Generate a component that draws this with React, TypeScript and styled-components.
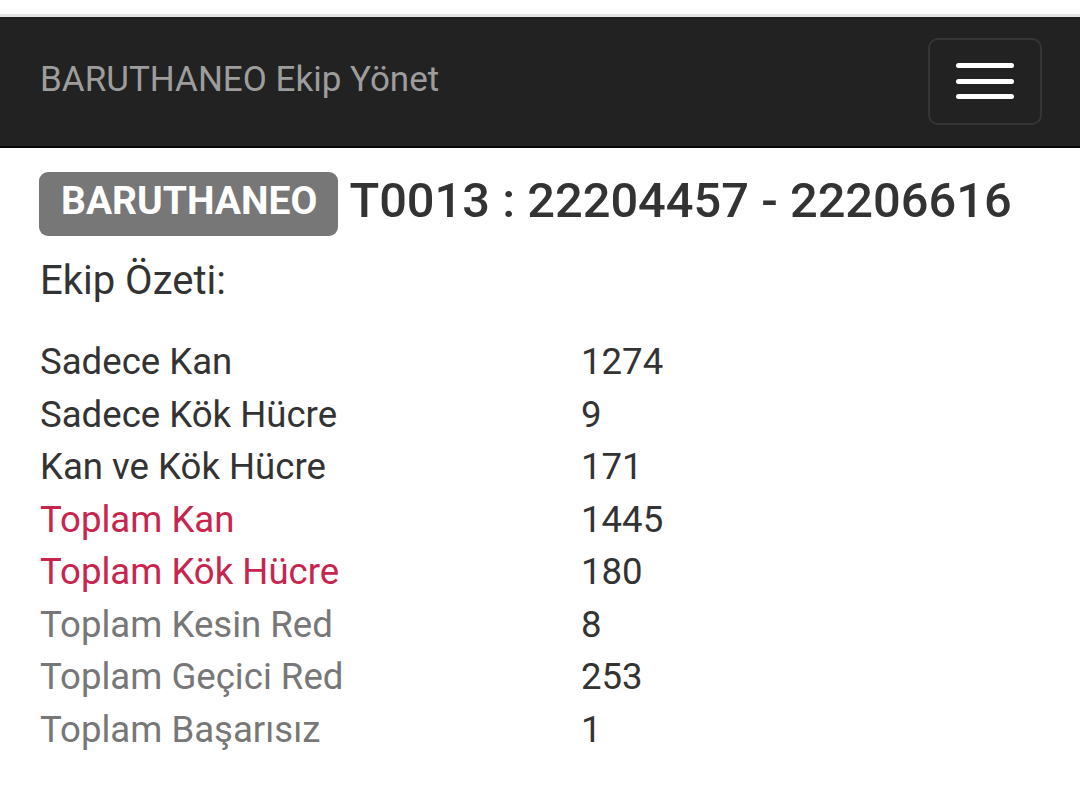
import React from "react";
import styled, { createGlobalStyle } from "styled-components";

const GlobalStyle = createGlobalStyle`
  * { box-sizing: border-box; }
  html, body { margin: 0; padding: 0; background: #ffffff; }
  body {
    font-family: Roboto, "Noto Sans", "Liberation Sans", sans-serif;
    color: #333333;
    width: 1080px;
    height: 806px;
    overflow: hidden;
  }
`;

const TopStrip = styled.div`
  height: 17px;
  background: #ffffff;
  border-bottom: 3px solid #e4e4e4;
`;

const Navbar = styled.nav`
  height: 131px;
  background: #222222;
  border-bottom: 2px solid #080808;
  display: flex;
  align-items: center;
  justify-content: space-between;
  padding: 0 38px 0 40px;
`;

const Brand = styled.a`
  color: #9d9d9d;
  font-size: 35px;
  line-height: 1;
  text-decoration: none;
  padding-bottom: 4px;
`;

const Toggle = styled.button`
  width: 114px;
  height: 87px;
  background: transparent;
  border: 2px solid #353535;
  border-radius: 10px;
  display: flex;
  flex-direction: column;
  align-items: center;
  justify-content: center;
  gap: 10.5px;
  padding: 0;
  margin-top: -1px;
`;

const Bar = styled.span`
  display: block;
  width: 58px;
  height: 5px;
  border-radius: 3px;
  background: #ffffff;
`;

const Main = styled.main`
  padding: 0 40px 0 39px;
`;

const Heading = styled.h3`
  margin: 24px 0 0;
  font-size: 48.8px;
  font-weight: 500;
  line-height: 55px;
  color: #333333;
  white-space: nowrap;
`;

const Label = styled.span`
  display: inline-block;
  background: #777777;
  color: #ffffff;
  font-weight: 700;
  font-size: 39px;
  line-height: 1;
  padding: 10px 21px 15px 22px;
  border-radius: 9px;
  margin-right: 11px;
  vertical-align: 3px;
`;

const Summary = styled.div`
  margin-top: 19px;
  padding-left: 1px;
  font-size: 40px;
  line-height: 52px;
  color: #333333;
`;

const StatGrid = styled.div`
  margin-top: 29px;
  padding-left: 1px;
  display: grid;
  grid-template-columns: 541px 1fr;
  font-size: 36.6px;
  line-height: 52.5px;
`;

const StatLabel = styled.div<{ $tone: "normal" | "danger" | "muted" }>`
  color: ${(p) =>
    p.$tone === "danger" ? "#c7254e" : p.$tone === "muted" ? "#777777" : "#333333"};
`;

const StatValue = styled.div`
  color: #333333;
`;

type Row = { label: string; value: string; tone: "normal" | "danger" | "muted" };

const rows: Row[] = [
  { label: "Sadece Kan", value: "1274", tone: "normal" },
  { label: "Sadece Kök Hücre", value: "9", tone: "normal" },
  { label: "Kan ve Kök Hücre", value: "171", tone: "normal" },
  { label: "Toplam Kan", value: "1445", tone: "danger" },
  { label: "Toplam Kök Hücre", value: "180", tone: "danger" },
  { label: "Toplam Kesin Red", value: "8", tone: "muted" },
  { label: "Toplam Geçici Red", value: "253", tone: "muted" },
  { label: "Toplam Başarısız", value: "1", tone: "muted" },
];

export default function App() {
  return (
    <>
      <GlobalStyle />
      <TopStrip />
      <Navbar>
        <Brand href="#">BARUTHANEO Ekip Yönet</Brand>
        <Toggle aria-label="menu">
          <Bar />
          <Bar />
          <Bar />
        </Toggle>
      </Navbar>
      <Main>
        <Heading>
          <Label>BARUTHANEO</Label>T0013 : 22204457 - 22206616
        </Heading>
        <Summary>Ekip Özeti:</Summary>
        <StatGrid>
          {rows.map((r) => (
            <React.Fragment key={r.label}>
              <StatLabel $tone={r.tone}>{r.label}</StatLabel>
              <StatValue>{r.value}</StatValue>
            </React.Fragment>
          ))}
        </StatGrid>
      </Main>
    </>
  );
}
